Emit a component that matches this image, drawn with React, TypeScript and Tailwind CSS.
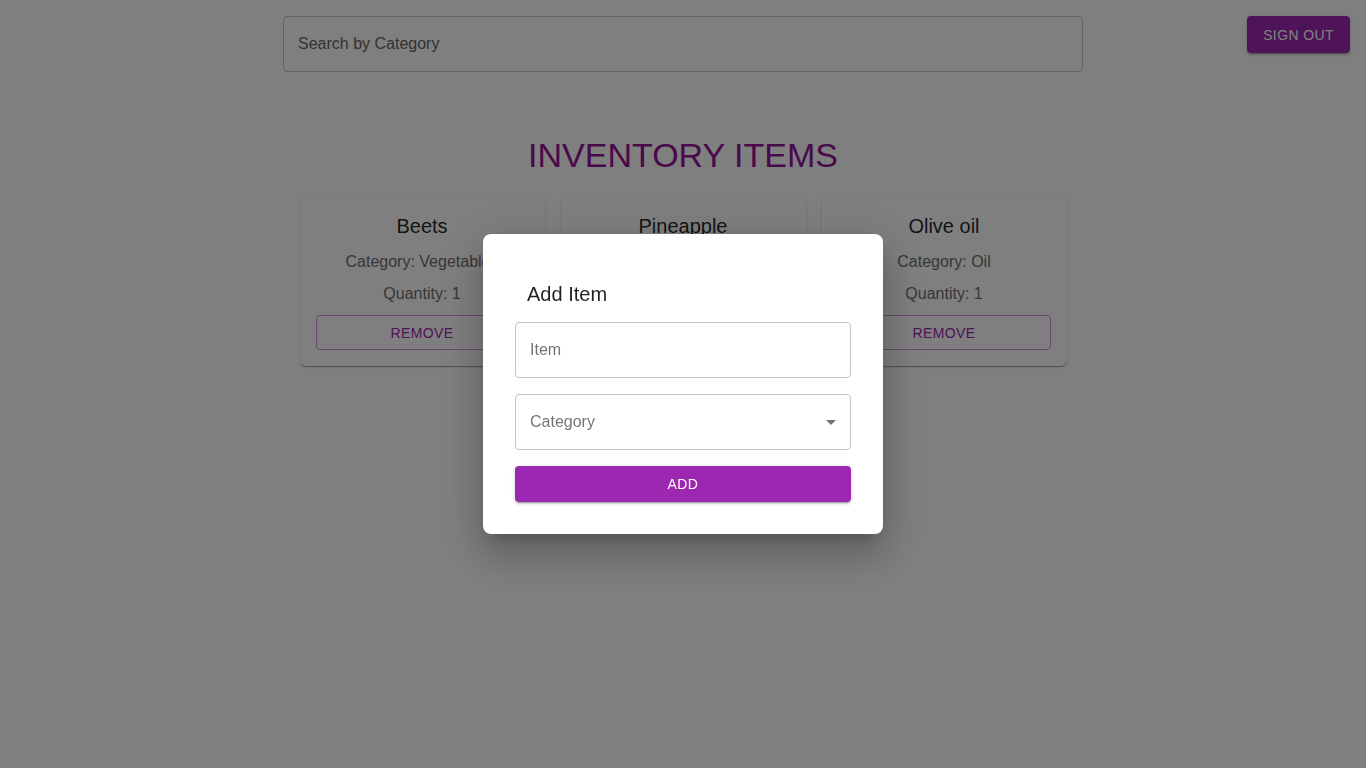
import React from "react";

const items = [
  { name: "Beets", category: "Vegetables", qty: 1 },
  { name: "Pineapple", category: "Fruit", qty: 1 },
  { name: "Olive oil", category: "Oil", qty: 1 },
];

export default function App() {
  return (
    <div className="min-h-screen bg-white font-['Liberation_Sans',Arial,sans-serif] text-[rgba(0,0,0,0.87)]">
      <div className="grid grid-cols-[1fr_800px_1fr] pt-4">
        <div />
        <div className="h-14 rounded border border-[#c4c4c4] flex items-center px-[14px] text-base text-[#666]">
          Search by Category
        </div>
        <div className="flex justify-end pr-4">
          <button className="h-[37px] px-4 rounded bg-[#9c27b0] text-white text-sm font-medium tracking-[0.4px] uppercase shadow-[0px_3px_1px_-2px_rgba(0,0,0,0.2),0px_2px_2px_0px_rgba(0,0,0,0.14),0px_1px_5px_0px_rgba(0,0,0,0.12)]">
            Sign out
          </button>
        </div>
      </div>

      <h1 className="mt-[62px] text-center text-[34px] leading-[42px] text-[#921394]">INVENTORY ITEMS</h1>

      <div className="mt-[19px] flex justify-center gap-4">
        {items.map((it) => (
          <div
            key={it.name}
            className="w-[245px] rounded-md bg-white p-4 flex flex-col items-center shadow-[0px_2px_1px_-1px_rgba(0,0,0,0.2),0px_1px_1px_0px_rgba(0,0,0,0.14),0px_1px_3px_0px_rgba(0,0,0,0.12)]"
          >
            <div className="text-xl leading-[30px]">{it.name}</div>
            <div className="mt-[9px] text-base leading-6 text-[#6e6e6e] whitespace-nowrap">Category: {it.category}</div>
            <div className="mt-2 text-base leading-6 text-[#6e6e6e]">Quantity: {it.qty}</div>
            <button className="mt-[9px] w-full h-[35px] rounded border border-[rgba(156,39,176,0.5)] text-[#9c27b0] text-sm tracking-[0.4px] uppercase">
              Remove
            </button>
          </div>
        ))}
      </div>

      <div className="fixed inset-0 bg-black/50 flex items-center justify-center">
        <div className="w-[400px] rounded-lg bg-white p-8 shadow-[0px_11px_15px_-7px_rgba(0,0,0,0.2),0px_24px_38px_3px_rgba(0,0,0,0.14),0px_9px_46px_8px_rgba(0,0,0,0.12)]">
          <div className="px-3 py-3 text-xl leading-8 text-[rgba(0,0,0,0.87)]">Add Item</div>
          <div className="h-14 rounded border border-[#c4c4c4] flex items-center px-[14px] text-base text-[#757575]">Item</div>
          <div className="mt-4 h-14 rounded border border-[#c4c4c4] flex items-center justify-between pl-[14px] pr-[7px] text-base text-[#757575]">
            <span>Category</span>
            <svg width="24" height="24" viewBox="0 0 24 24" className="fill-[rgba(0,0,0,0.54)]">
              <path d="M7 10l5 5 5-5z" />
            </svg>
          </div>
          <button className="mt-4 w-full h-9 rounded bg-[#9c27b0] text-white text-sm font-medium tracking-[0.4px] uppercase shadow-[0px_3px_1px_-2px_rgba(0,0,0,0.2),0px_2px_2px_0px_rgba(0,0,0,0.14),0px_1px_5px_0px_rgba(0,0,0,0.12)]">
            Add
          </button>
        </div>
      </div>
    </div>
  );
}
